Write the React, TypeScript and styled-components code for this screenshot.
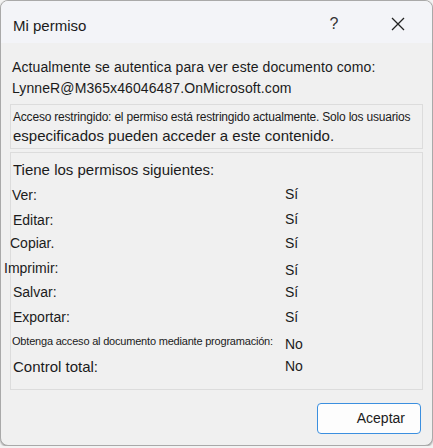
import React from "react";
import styled, { createGlobalStyle } from "styled-components";

const GlobalStyle = createGlobalStyle`
  html, body {
    margin: 0;
    padding: 0;
    background: #f3f3f3;
  }
  body {
    font-family: "Segoe UI", "Liberation Sans", Arial, sans-serif;
    color: #1b1b1b;
  }
`;

const Window = styled.div`
  box-sizing: border-box;
  width: 433px;
  height: 446px;
  border: 1px solid #a9a9a9;
  border-radius: 8px;
  box-shadow: 0 1px 2px rgba(0, 0, 0, 0.35);
  background: #f0f0f0;
  overflow: hidden;
  display: flex;
  flex-direction: column;
`;

const TitleBar = styled.div`
  height: 42px;
  flex: none;
  background: #f3f4f8;
  display: flex;
  align-items: center;
  padding-left: 12px;
  font-size: 15px;
`;

const Title = styled.div`
  flex: 1;
  padding-top: 6px;
`;

const TitleButton = styled.button<{ $w: number }>`
  border: none;
  background: transparent;
  width: ${(p) => p.$w}px;
  height: 42px;
  padding: 4px 0 0 0;
  display: flex;
  align-items: center;
  justify-content: center;
  font-family: inherit;
  font-size: 16px;
  color: #333;
`;

const Body = styled.div`
  flex: 1;
  display: flex;
  flex-direction: column;
  padding: 14px 9px 0 9px;
`;

const Intro = styled.div`
  font-size: 14px;
  line-height: 21px;
  padding-left: 2px;
  letter-spacing: 0.1px;
`;

const Box = styled.div`
  border: 1px solid #dcdcdc;
  box-sizing: border-box;
`;

const Restricted = styled(Box)`
  margin-top: 5px;
  height: 45px;
  padding: 5px 0 0 2px;
`;

const SmallLine = styled.div`
  font-size: 12px;
  line-height: 15px;
  letter-spacing: -0.2px;
`;

const BigLine = styled.div`
  font-size: 15px;
  line-height: 22px;
`;

const PermBox = styled(Box)`
  margin-top: 3px;
  height: 238px;
  padding: 7px 0 0 0;
`;

const PermHead = styled.div`
  font-size: 15px;
  line-height: 20px;
  padding-left: 2px;
  margin-bottom: 6px;
`;

const PermList = styled.div`
  display: grid;
  grid-template-columns: 275px 1fr;
  grid-auto-rows: 24.6px;
  margin-left: -1px;
`;

const Label = styled.div<{ $shift: number; $size: number; $drop: number }>`
  font-size: ${(p) => p.$size}px;
  margin-left: ${(p) => p.$shift}px;
  padding-top: ${(p) => p.$drop}px;
  white-space: nowrap;
  letter-spacing: ${(p) => (p.$size < 13 ? "-0.2px" : "0")};
`;

const Value = styled.div<{ $drop: number }>`
  font-size: 14px;
  padding-top: ${(p) => p.$drop}px;
`;

const Footer = styled.div`
  display: flex;
  justify-content: flex-end;
  padding: 13px 2px 0 0;
`;

const OkButton = styled.button`
  box-sizing: border-box;
  width: 104px;
  height: 31px;
  background: #fdfdfd;
  border: 1px solid #3b8fdf;
  border-radius: 4px;
  display: flex;
  align-items: center;
  justify-content: flex-end;
  padding: 0 15px 2px 0;
  font-family: inherit;
  font-size: 14px;
  color: #1b1b1b;
`;

const perms = [
  { label: "Ver:", value: "Sí", shift: 2, size: 14, drop: 1, vdrop: 0 },
  { label: "Editar:", value: "Sí", shift: 3, size: 14, drop: 1, vdrop: -1 },
  { label: "Copiar.", value: "Sí", shift: 0, size: 14, drop: 0, vdrop: 0 },
  { label: "Imprimir:", value: "Sí", shift: -6, size: 14, drop: 0, vdrop: 2 },
  { label: "Salvar:", value: "Sí", shift: 3, size: 14, drop: 0, vdrop: 0 },
  { label: "Exportar:", value: "Sí", shift: 3, size: 14, drop: 0, vdrop: 0 },
  { label: "Obtenga acceso al documento mediante programación:", value: "No", shift: 2, size: 11, drop: 1, vdrop: 2 },
  { label: "Control total:", value: "No", shift: 3, size: 15, drop: -1, vdrop: 0 },
];

const CloseIcon = () => (
  <svg width="14" height="14" viewBox="0 0 14 14">
    <path d="M1 1 L13 13 M13 1 L1 13" stroke="#222" strokeWidth="1.3" fill="none" />
  </svg>
);

export default function App() {
  return (
    <>
      <GlobalStyle />
      <Window>
        <TitleBar>
          <Title>Mi permiso</Title>
          <TitleButton $w={60}>?</TitleButton>
          <TitleButton $w={68}>
            <CloseIcon />
          </TitleButton>
        </TitleBar>
        <Body>
          <Intro>
            Actualmente se autentica para ver este documento como:
            <br />
            LynneR@M365x46046487.OnMicrosoft.com
          </Intro>
          <Restricted>
            <SmallLine>
              Acceso restringido: el permiso está restringido actualmente. Solo los usuarios
            </SmallLine>
            <BigLine>especificados pueden acceder a este contenido.</BigLine>
          </Restricted>
          <PermBox>
            <PermHead>Tiene los permisos siguientes:</PermHead>
            <PermList>
              {perms.map((p) => (
                <React.Fragment key={p.label}>
                  <Label $shift={p.shift} $size={p.size} $drop={p.drop}>
                    {p.label}
                  </Label>
                  <Value $drop={p.vdrop}>{p.value}</Value>
                </React.Fragment>
              ))}
            </PermList>
          </PermBox>
          <Footer>
            <OkButton>Aceptar</OkButton>
          </Footer>
        </Body>
      </Window>
    </>
  );
}
